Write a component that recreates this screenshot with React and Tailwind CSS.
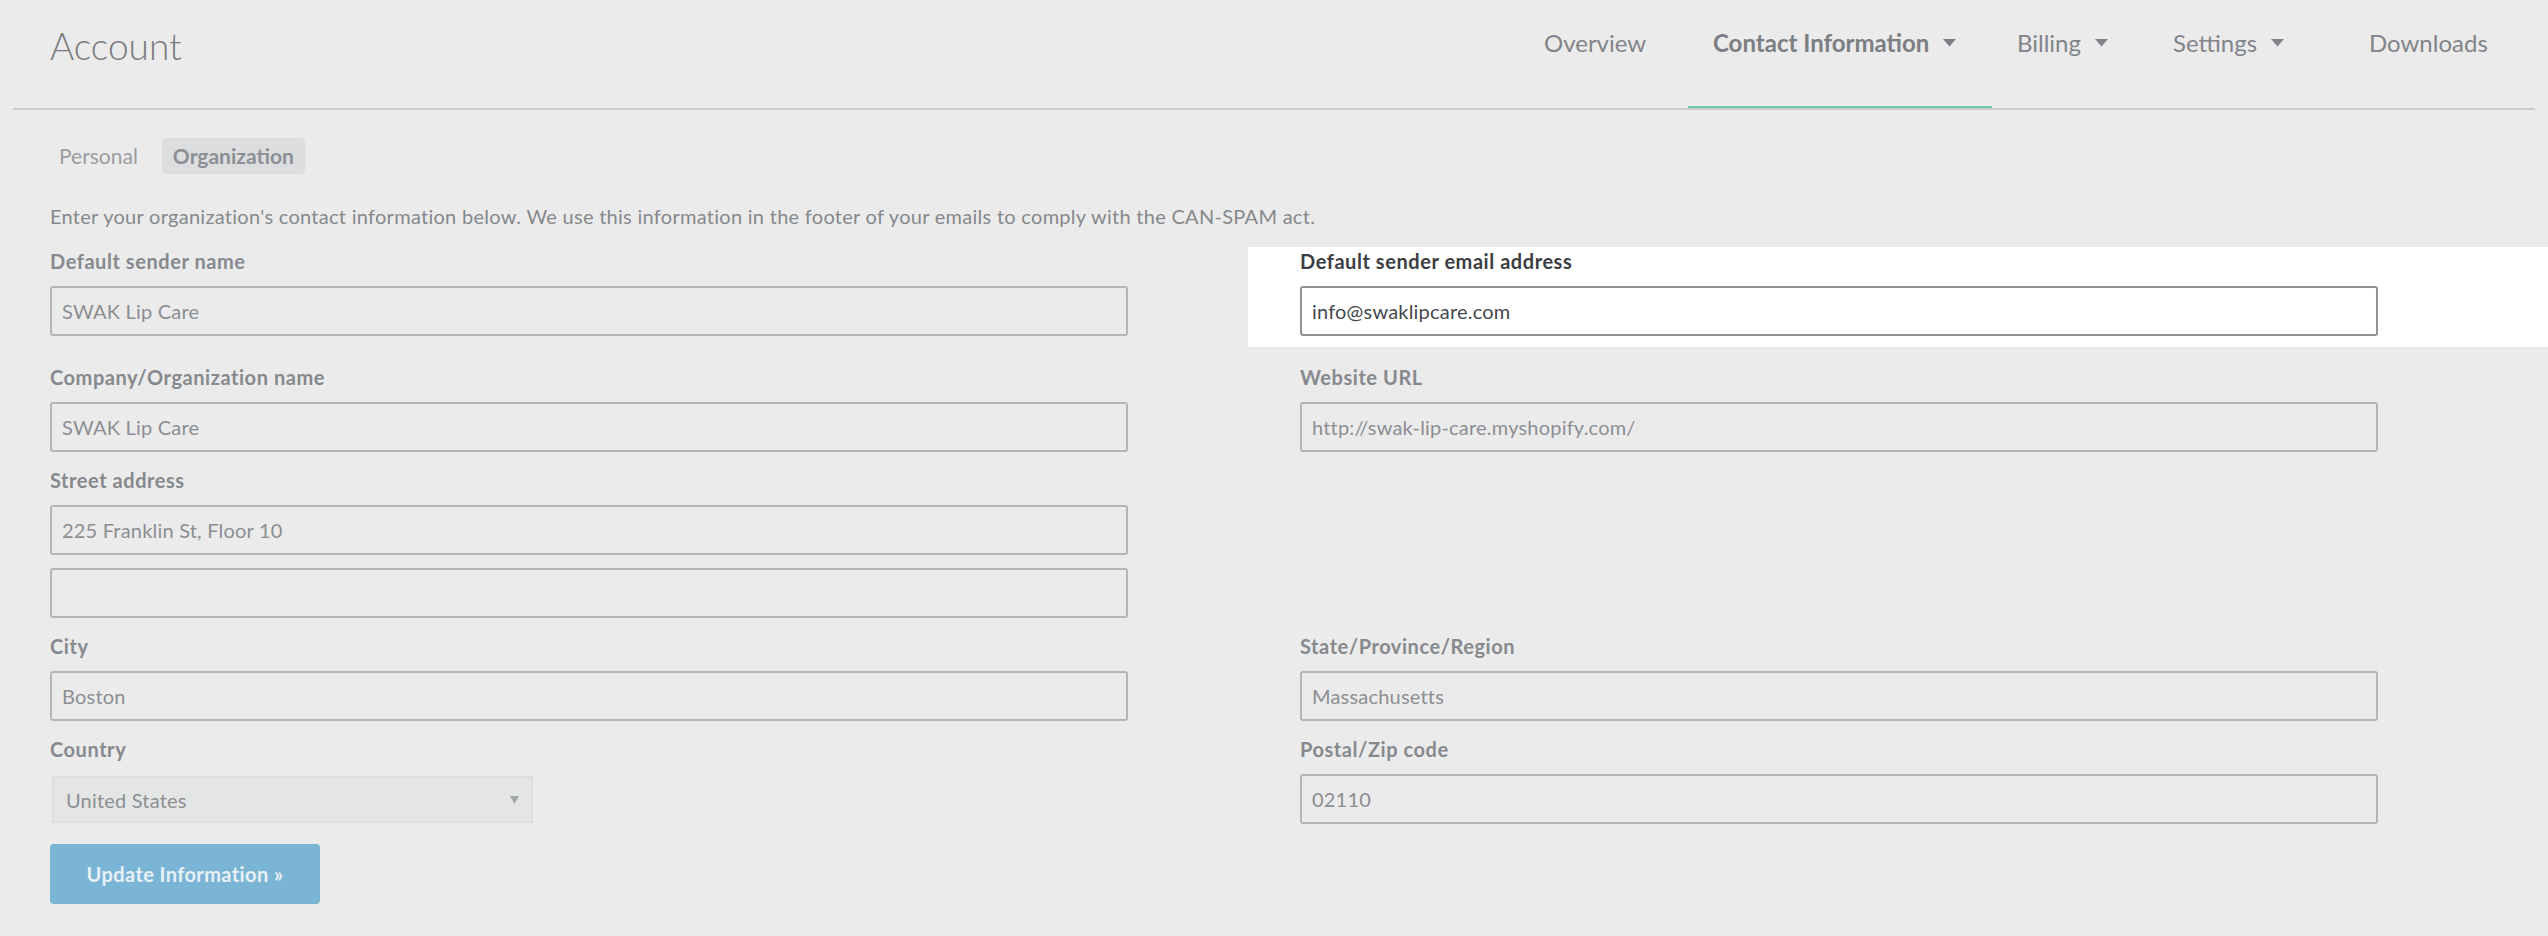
import React from "react";

const Caret = ({ className = "" }) => (
  <svg width="13" height="8" viewBox="0 0 13 8" className={className}>
    <polygon points="0,0 13,0 6.5,7.5" fill="currentColor" />
  </svg>
);

const labelCls = "h-[24px] text-[20px] leading-[24px] font-bold tracking-[0.55px]";

function Field({ label, value, focused = false, pad = "pl-[50px]" }) {
  return (
    <div className={pad}>
      <div
        className={`${labelCls} ${
          focused ? "text-[#3b3e43]" : "text-[#86898d]"
        }`}
      >
        {label}
      </div>
      <input
        readOnly
        value={value}
        className={`mt-[13px] block h-[50px] w-[1078px] rounded-[3px] border-2 px-[10px] text-[20px] tracking-[0.2px] outline-none ${
          focused
            ? "border-[#8f9297] bg-white text-[#45484d]"
            : "border-[#b3b6b9] bg-transparent text-[#8b8e92]"
        }`}
      />
    </div>
  );
}

function NavItem({ label, width, caret, active, first }) {
  return (
    <div
      className={`flex h-full items-start border-b-2 pt-[31px] ${
        active ? "border-[#70c99d]" : "border-transparent"
      } ${first ? "" : "pl-[25px]"} ${width}`}
    >
      <span
        className={`text-[24px] leading-none ${
          active ? "font-bold text-[#7b7e83]" : "font-normal text-[#818489]"
        }`}
      >
        {label}
      </span>
      {caret && (
        <Caret
          className={`ml-[14px] mt-[8px] ${
            active ? "text-[#7b7e83]" : "text-[#818489]"
          }`}
        />
      )}
    </div>
  );
}

export default function App() {
  return (
    <div className="min-h-screen w-full bg-[#ebebeb] font-['Lato',sans-serif]">
      <header className="mx-[13px] flex h-[110px] border-b-2 border-[#c9cbce]">
        <h1 className="pl-[37px] pt-[27px] text-[37px] font-light leading-none text-[#787b80]">
          Account
        </h1>
        <nav className="ml-auto flex h-[108px]">
          <NavItem label="Overview" width="w-[144px]" first />
          <NavItem label="Contact Information" width="w-[304px]" caret active />
          <NavItem label="Billing" width="w-[156px]" caret />
          <NavItem label="Settings" width="w-[196px]" caret />
          <NavItem label="Downloads" width="w-[191px]" />
        </nav>
      </header>

      <div className="ml-[48px] mt-[28px] flex gap-[13px]">
        <div className="h-[36px] px-[11px] text-[21px] leading-[36px] text-[#9a9da1]">
          Personal
        </div>
        <div className="h-[36px] rounded-[4px] bg-[#dcdddf] px-[11px] text-[21px] font-bold leading-[36px] text-[#8c8f94]">
          Organization
        </div>
      </div>

      <p className="ml-[50px] mt-[30px] text-[20px] leading-[24px] tracking-[0.28px] text-[#85888c]">
        Enter your organization's contact information below. We use this
        information in the footer of your emails to comply with the CAN-SPAM
        act.
      </p>

      <div className="mt-[19px]">
        <div className="grid grid-cols-[1248px_1300px]">
          <div className="pb-[11px] pt-[2px]">
            <Field label="Default sender name" value="SWAK Lip Care" />
          </div>
          <div className="bg-white pb-[11px] pt-[2px]">
            <Field
              label="Default sender email address"
              value="info@swaklipcare.com"
              focused
              pad="pl-[52px]"
            />
          </div>
        </div>

        <div className="mt-[18px] grid grid-cols-[1248px_1300px]">
          <Field label="Company/Organization name" value="SWAK Lip Care" />
          <Field
            label="Website URL"
            value="http://swak-lip-care.myshopify.com/"
            pad="pl-[52px]"
          />
        </div>

        <div className="mt-[16px] grid grid-cols-[1248px_1300px]">
          <div>
            <Field label="Street address" value="225 Franklin St, Floor 10" />
            <div className="pl-[50px]">
              <input
                readOnly
                value=""
                className="mt-[13px] block h-[50px] w-[1078px] rounded-[3px] border-2 border-[#b3b6b9] bg-transparent px-[10px] text-[20px] text-[#8b8e92] outline-none"
              />
            </div>
          </div>
          <div />
        </div>

        <div className="mt-[16px] grid grid-cols-[1248px_1300px]">
          <Field label="City" value="Boston" />
          <Field
            label="State/Province/Region"
            value="Massachusetts"
            pad="pl-[52px]"
          />
        </div>

        <div className="mt-[16px] grid grid-cols-[1248px_1300px]">
          <div className="pl-[50px]">
            <div className={`${labelCls} text-[#86898d]`}>Country</div>
            <div className="ml-[2px] mt-[15px] flex h-[47px] w-[481px] items-center justify-between border-2 border-[#dcdddd] bg-[#e4e5e5] pl-[12px] pr-[12px]">
              <span className="text-[20px] tracking-[0.2px] text-[#8c8f93]">
                United States
              </span>
              <svg width="9" height="8" viewBox="0 0 9 8">
                <polygon points="0,0 9,0 4.5,8" fill="#a3a6a9" />
              </svg>
            </div>
          </div>
          <Field label="Postal/Zip code" value="02110" pad="pl-[52px]" />
        </div>

        <div className="pl-[50px] pt-[20px]">
          <button className="h-[60px] w-[270px] rounded-[4px] bg-[#7bb5d5] text-[20px] font-bold tracking-[0.4px] text-[#e8f0f5]">
            Update Information »
          </button>
        </div>
      </div>
    </div>
  );
}
